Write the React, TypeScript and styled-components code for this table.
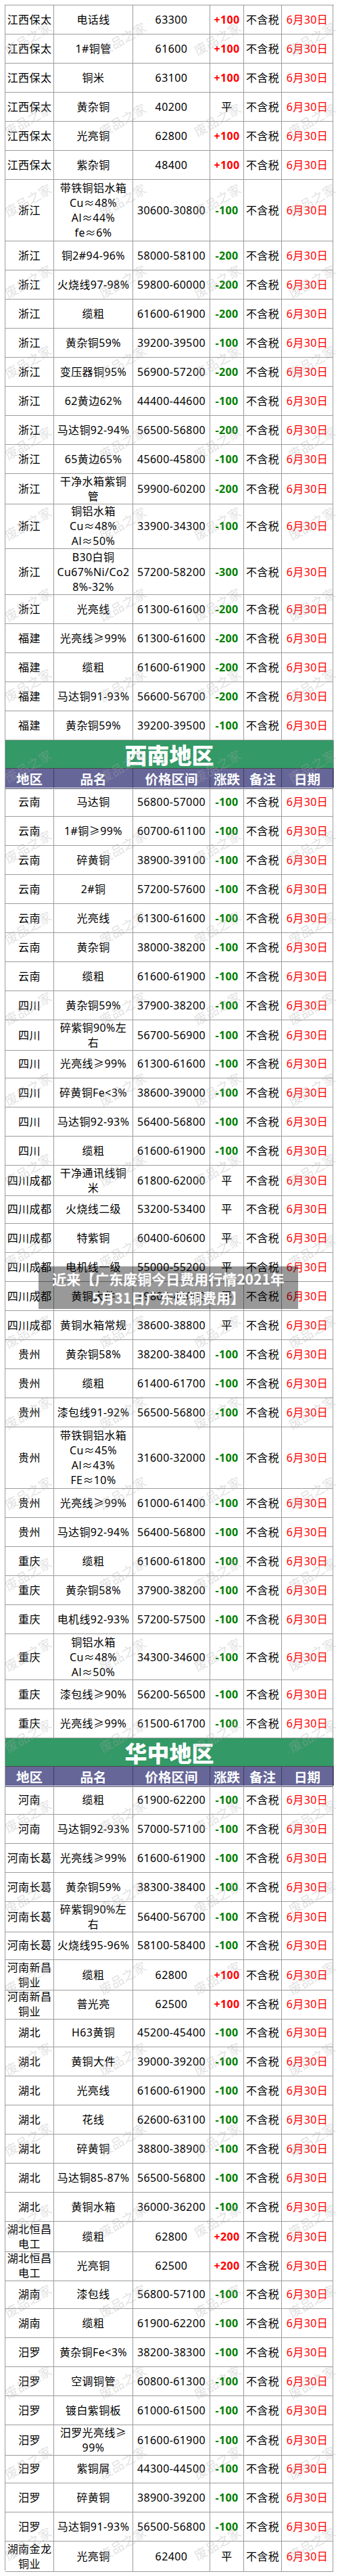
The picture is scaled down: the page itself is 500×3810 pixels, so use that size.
import React from 'react';
import styled, { createGlobalStyle } from 'styled-components';

const GlobalStyle = createGlobalStyle`
  html, body {
    margin: 0;
    padding: 0;
    background: #fff;
  }
`;

const COLS = '72px 117px 114px 50px 56px 76px';
const LINE = '#9c9c9c';

const Page = styled.div`
  position: relative;
  width: 500px;
  height: 3810px;
  overflow: hidden;
  box-sizing: border-box;
  padding: 7px 0 0 7px;
  background: #fff;
  font-family: "Noto Sans", "Noto Sans CJK SC", sans-serif;
`;

const Table = styled.div`
  width: 486px;
  border-left: 1px solid ${LINE};
  border-top: 1px solid ${LINE};
`;

const Row = styled.div<{ $h: number }>`
  display: grid;
  grid-template-columns: ${COLS};
  height: ${(p) => p.$h}px;
`;

const Cell = styled.div`
  display: flex;
  align-items: center;
  justify-content: center;
  box-sizing: border-box;
  border-right: 1px solid ${LINE};
  border-bottom: 1px solid ${LINE};
  font-size: 16px;
  line-height: 22px;
  letter-spacing: 0.4px;
  text-align: center;
  white-space: pre;
  color: #000;
`;

const Change = styled(Cell)<{ $tone: 'up' | 'down' | 'flat' }>`
  font-weight: ${(p) => (p.$tone === 'flat' ? 400 : 700)};
  color: ${(p) => (p.$tone === 'up' ? '#ff0000' : p.$tone === 'down' ? '#008000' : '#000')};
`;

const DateCell = styled(Cell)`
  color: #ff0000;
`;

const Band = styled.div`
  height: 42px;
  box-sizing: border-box;
  display: flex;
  align-items: center;
  justify-content: center;
  background: #339966;
  border-right: 1px solid ${LINE};
  border-bottom: 1px solid #4a4a4a;
  color: #fff;
  font-family: "Noto Sans CJK SC", sans-serif;
  font-size: 33px;
  font-weight: 900;
  line-height: 42px;
`;

const HeadRow = styled.div`
  display: grid;
  grid-template-columns: ${COLS};
  height: 28px;
  background: #666699;
`;

const HeadCell = styled.div`
  display: flex;
  align-items: center;
  justify-content: center;
  box-sizing: border-box;
  border-right: 1px solid #3e3e5e;
  border-bottom: 1px solid #3e3e5e;
  color: #fff;
  font-family: "Noto Sans CJK SC", sans-serif;
  font-size: 19.5px;
  font-weight: 700;
`;

const Watermarks = styled.div`
  position: absolute;
  top: -3px;
  left: -29px;
  width: 560px;
  display: grid;
  grid-template-columns: repeat(4, 140px);
  grid-auto-rows: 119.5px;
  pointer-events: none;
`;

const Mark = styled.span`
  place-self: center;
  transform: rotate(-30deg);
  font-family: "Noto Sans CJK SC", sans-serif;
  font-size: 19px;
  white-space: nowrap;
  color: rgba(170, 170, 170, 0.35);
`;

const Caption = styled.div`
  position: absolute;
  left: 57px;
  top: 1873px;
  width: 384px;
  height: 63px;
  box-sizing: border-box;
  padding: 4px 10px;
  display: flex;
  flex-direction: column;
  align-items: center;
  justify-content: center;
  background: rgba(0, 0, 0, 0.4);
  color: #fff;
  font-family: "Noto Sans CJK SC", sans-serif;
  font-size: 21px;
  font-weight: 700;
  line-height: 28px;
  text-align: center;
`;

type Item = [string, string, string, string];

const east: Item[] = [
  ['江西保太', '电话线', '63300', '+100'],
  ['江西保太', '1#铜管', '61600', '+100'],
  ['江西保太', '铜米', '63100', '+100'],
  ['江西保太', '黄杂铜', '40200', '平'],
  ['江西保太', '光亮铜', '62800', '+100'],
  ['江西保太', '紫杂铜', '48400', '+100'],
  ['浙江', '带铁铜铝水箱\nCu≈48%\nAl≈44%\nfe≈6%', '30600-30800', '-100'],
  ['浙江', '铜2#94-96%', '58000-58100', '-200'],
  ['浙江', '火烧线97-98%', '59800-60000', '-200'],
  ['浙江', '缆粗', '61600-61900', '-200'],
  ['浙江', '黄杂铜59%', '39200-39500', '-100'],
  ['浙江', '变压器铜95%', '56900-57200', '-200'],
  ['浙江', '62黄边62%', '44400-44600', '-100'],
  ['浙江', '马达铜92-94%', '56500-56800', '-200'],
  ['浙江', '65黄边65%', '45600-45800', '-100'],
  ['浙江', '干净水箱紫铜\n管', '59900-60200', '-200'],
  ['浙江', '铜铝水箱\nCu≈48%\nAl≈50%', '33900-34300', '-100'],
  ['浙江', 'B30白铜\nCu67%Ni/Co2\n8%-32%', '57200-58200', '-300'],
  ['浙江', '光亮线', '61300-61600', '-200'],
  ['福建', '光亮线≥99%', '61300-61600', '-200'],
  ['福建', '缆粗', '61600-61900', '-200'],
  ['福建', '马达铜91-93%', '56600-56700', '-200'],
  ['福建', '黄杂铜59%', '39200-39500', '-100'],
];

const southwest: Item[] = [
  ['云南', '马达铜', '56800-57000', '-100'],
  ['云南', '1#铜≥99%', '60700-61100', '-100'],
  ['云南', '碎黄铜', '38900-39100', '-100'],
  ['云南', '2#铜', '57200-57600', '-100'],
  ['云南', '光亮线', '61300-61600', '-100'],
  ['云南', '黄杂铜', '38000-38200', '-100'],
  ['云南', '缆粗', '61600-61900', '-100'],
  ['四川', '黄杂铜59%', '37900-38200', '-100'],
  ['四川', '碎紫铜90%左\n右', '56700-56900', '-100'],
  ['四川', '光亮线≥99%', '61300-61600', '-100'],
  ['四川', '碎黄铜Fe<3%', '38600-39000', '-100'],
  ['四川', '马达铜92-93%', '56400-56800', '-100'],
  ['四川', '缆粗', '61600-61900', '-100'],
  ['四川成都', '干净通讯线铜\n米', '61800-62000', '平'],
  ['四川成都', '火烧线二级', '53200-53400', '平'],
  ['四川成都', '特紫铜', '60400-60600', '平'],
  ['四川成都', '电机线一级', '55000-55200', '平'],
  ['四川成都', '黄铜大件', '39800-40000', '平'],
  ['四川成都', '黄铜水箱常规', '38600-38800', '平'],
  ['贵州', '黄杂铜58%', '38200-38400', '-100'],
  ['贵州', '缆粗', '61400-61700', '-100'],
  ['贵州', '漆包线91-92%', '56500-56800', '-100'],
  ['贵州', '带铁铜铝水箱\nCu≈45%\nAl≈43%\nFE≈10%', '31600-32000', '-100'],
  ['贵州', '光亮线≥99%', '61000-61400', '-100'],
  ['贵州', '马达铜92-94%', '56400-56800', '-100'],
  ['重庆', '缆粗', '61600-61800', '-100'],
  ['重庆', '黄杂铜58%', '37900-38200', '-100'],
  ['重庆', '电机线92-93%', '57200-57500', '-100'],
  ['重庆', '铜铝水箱\nCu≈48%\nAl≈50%', '34300-34600', '-100'],
  ['重庆', '漆包线≥90%', '56200-56500', '-100'],
  ['重庆', '光亮线≥99%', '61500-61700', '-100'],
];

const central: Item[] = [
  ['河南', '缆粗', '61900-62200', '-100'],
  ['河南', '马达铜92-93%', '57000-57100', '-100'],
  ['河南长葛', '光亮线≥99%', '61600-61900', '-100'],
  ['河南长葛', '黄杂铜59%', '38300-38400', '-100'],
  ['河南长葛', '碎紫铜90%左\n右', '56400-56700', '-100'],
  ['河南长葛', '火烧线95-96%', '58100-58400', '-100'],
  ['河南新昌\n铜业', '缆粗', '62800', '+100'],
  ['河南新昌\n铜业', '普光亮', '62500', '+100'],
  ['湖北', 'H63黄铜', '45200-45400', '-100'],
  ['湖北', '黄铜大件', '39000-39200', '-100'],
  ['湖北', '光亮线', '61600-61900', '-100'],
  ['湖北', '花线', '62600-63100', '-100'],
  ['湖北', '碎黄铜', '38800-38900', '-100'],
  ['湖北', '马达铜85-87%', '56500-56800', '-100'],
  ['湖北', '黄铜水箱', '36000-36200', '-100'],
  ['湖北恒昌\n电工', '缆粗', '62800', '+200'],
  ['湖北恒昌\n电工', '光亮铜', '62500', '+200'],
  ['湖南', '漆包线', '56800-57100', '-100'],
  ['湖南', '缆粗', '61900-62200', '-100'],
  ['汨罗', '黄杂铜Fe<3%', '38200-38300', '-100'],
  ['汨罗', '空调铜管', '60800-61300', '-100'],
  ['汨罗', '镀白紫铜板', '61000-61500', '-100'],
  ['汨罗', '汨罗光亮线≥\n99%', '61600-61900', '-100'],
  ['汨罗', '紫铜屑', '44300-44500', '-100'],
  ['汨罗', '碎黄铜', '38900-39200', '-100'],
  ['汨罗', '马达铜91-93%', '56500-56800', '-100'],
  ['湖南金龙\n铜业', '光亮铜', '62400', '平'],
];

const heads = ['地区', '品名', '价格区间', '涨跌', '备注', '日期'];

const rowHeight = (item: Item) => {
  const lines = Math.max(item[0].split('\n').length, item[1].split('\n').length);
  if (lines >= 4) return 91;
  if (lines === 3) return 68;
  return 43;
};

const tone = (c: string) => (c.startsWith('+') ? 'up' : c.startsWith('-') ? 'down' : 'flat');

const PriceRows = ({ items }: { items: Item[] }) => (
  <>
    {items.map((item, i) => (
      <Row key={i} $h={rowHeight(item)}>
        <Cell>{item[0]}</Cell>
        <Cell>{item[1]}</Cell>
        <Cell>{item[2]}</Cell>
        <Change $tone={tone(item[3])}>{item[3]}</Change>
        <Cell>不含税</Cell>
        <DateCell>6月30日</DateCell>
      </Row>
    ))}
  </>
);

const Section = ({ title, items }: { title: string; items: Item[] }) => (
  <>
    <Band>{title}</Band>
    <HeadRow>
      {heads.map((h) => (
        <HeadCell key={h}>{h}</HeadCell>
      ))}
    </HeadRow>
    <PriceRows items={items} />
  </>
);

export default function App() {
  return (
    <>
      <GlobalStyle />
      <Page>
        <Table>
          <PriceRows items={east} />
          <Section title="西南地区" items={southwest} />
          <Section title="华中地区" items={central} />
        </Table>
        <Watermarks>
          {Array.from({ length: 128 }).map((_, i) => (
            <Mark key={i}>废品之家</Mark>
          ))}
        </Watermarks>
        <Caption>
          <span>近来【广东废铜今日费用行情2021年</span>
          <span>5月31日广东废铜费用】</span>
        </Caption>
      </Page>
    </>
  );
}
